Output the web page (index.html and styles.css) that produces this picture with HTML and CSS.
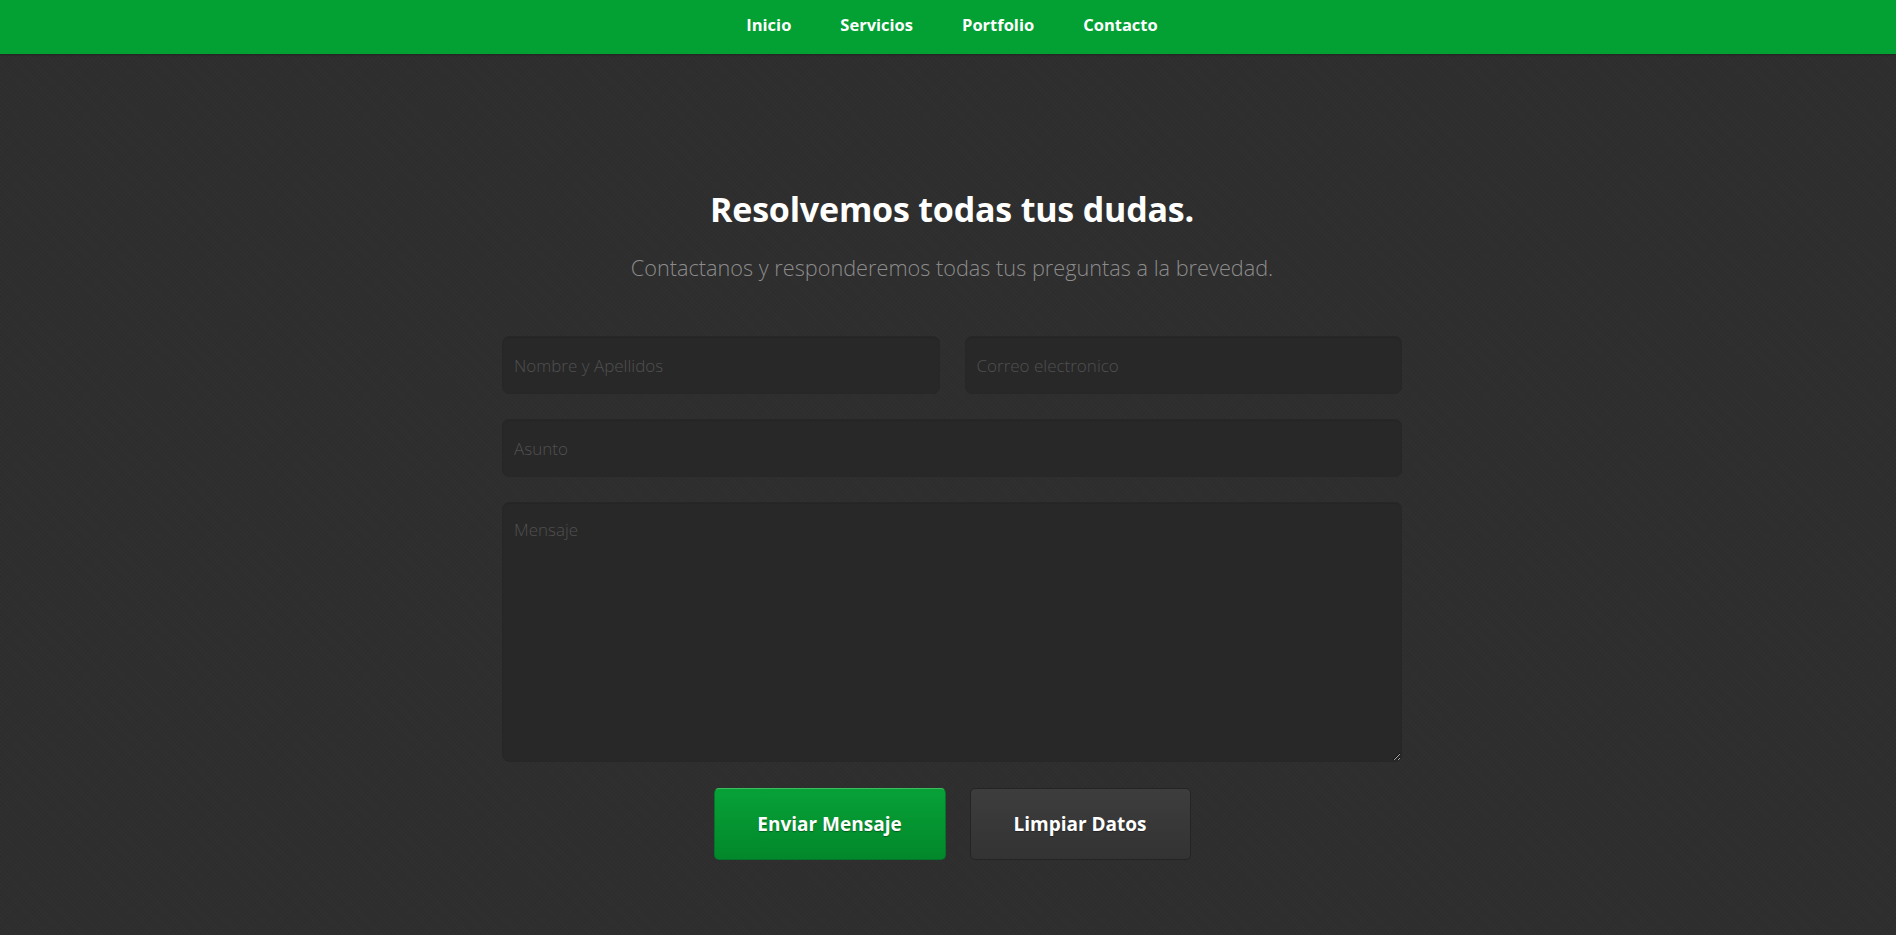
FILE: index.html
```html
<!DOCTYPE html>
<html lang="es">
<head>
<meta charset="utf-8">
<title>Contacto</title>
<link rel="stylesheet" href="styles.css">
</head>
<body>
<header class="topbar">
  <nav class="menu">
    <a href="#" class="menu-link">Inicio</a>
    <a href="#" class="menu-link">Servicios</a>
    <a href="#" class="menu-link">Portfolio</a>
    <a href="#" class="menu-link">Contacto</a>
  </nav>
</header>
<main class="contact">
  <h1 class="contact-title">Resolvemos todas tus dudas.</h1>
  <p class="contact-sub">Contactanos y responderemos todas tus preguntas a la brevedad.</p>
  <form class="contact-form">
    <div class="row two">
      <input class="field" type="text" placeholder="Nombre y Apellidos">
      <input class="field" type="email" placeholder="Correo electronico">
    </div>
    <input class="field" type="text" placeholder="Asunto">
    <textarea class="field area" placeholder="Mensaje"></textarea>
    <div class="actions">
      <button type="button" class="btn btn-send">Enviar Mensaje</button>
      <button type="reset" class="btn btn-clear">Limpiar Datos</button>
    </div>
  </form>
</main>
</body>
</html>
```

FILE: styles.css
```css
html, body {
  margin: 0;
  padding: 0;
}
body {
  background-color: #2e2e2e;
  background-image:
    repeating-linear-gradient(45deg, rgba(255,255,255,0.012) 0 1px, transparent 1px 3px),
    repeating-linear-gradient(-45deg, rgba(0,0,0,0.03) 0 1px, transparent 1px 3px);
  font-family: "Open Sans", "Liberation Sans", sans-serif;
  min-height: 935px;
}
.topbar {
  background: #03a034;
  height: 54px;
  box-shadow: 0 1px 2px rgba(0,0,0,0.25);
}
.menu {
  display: flex;
  justify-content: center;
  align-items: flex-start;
  height: 54px;
  padding-left: 8px;
}
.menu-link {
  color: #ffffff;
  text-decoration: none;
  font-weight: 700;
  font-size: 16.5px;
  padding: 0 24.5px;
  line-height: 49px;
}
.contact {
  width: 900px;
  margin: 0 auto;
  padding: 0 0 60px 8px;
  display: flex;
  flex-direction: column;
  align-items: center;
}
.contact-title {
  margin: 131px 0 0;
  font-size: 34px;
  line-height: 48px;
  font-weight: 700;
  color: #ffffff;
  letter-spacing: -0.2px;
}
.contact-sub {
  margin: 20px 0 0;
  font-size: 21.7px;
  line-height: 30px;
  font-weight: 300;
  color: #8c8c8c;
}
.contact-form {
  width: 900px;
  margin-top: 53px;
  display: flex;
  flex-direction: column;
  gap: 25px;
}
.row.two {
  display: grid;
  grid-template-columns: 1fr 1fr;
  gap: 25px;
}
.field {
  box-sizing: border-box;
  height: 58px;
  width: 100%;
  background: #282828;
  border: 1px solid #272727;
  border-radius: 7px;
  padding: 0 11px;
  font-family: "Open Sans", "Liberation Sans", sans-serif;
  font-weight: 300;
  font-size: 17px;
  color: #bbbbbb;
  outline: none;
  box-shadow: inset 0 1px 1px rgba(0,0,0,0.08);
}
.field::placeholder {
  color: #505050;
}
.area {
  height: 260px;
  padding: 14px 11px;
  resize: vertical;
  line-height: 26px;
}
.actions {
  display: flex;
  justify-content: center;
  gap: 24px;
  margin-top: 1px;
}
.btn {
  height: 72px;
  border-radius: 5px;
  font-family: "Open Sans", "Liberation Sans", sans-serif;
  font-weight: 700;
  font-size: 19px;
  color: #ffffff;
  cursor: pointer;
  text-shadow: 0 1px 1px rgba(0,0,0,0.35);
}
.btn-send {
  width: 232px;
  background: linear-gradient(#07a138, #02882a);
  border: 1px solid #02752a;
  border-top-color: #3dbb5f;
}
.btn-clear {
  width: 221px;
  background: linear-gradient(#3d3d3d, #333333);
  border: 1px solid #242424;
}
```
